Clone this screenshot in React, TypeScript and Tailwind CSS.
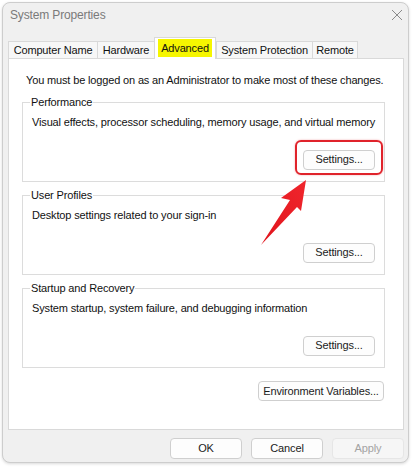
import React from 'react'

const font = "font-['Liberation_Sans','Noto_Sans',sans-serif] tracking-[-0.15px]"

function WinButton({ label, className = '', disabled = false }: { label: string; className?: string; disabled?: boolean }) {
  return (
    <button
      className={`h-[20px] whitespace-nowrap rounded-[4px] border text-[11px] leading-none ${
        disabled ? 'border-[#e6e6e6] bg-[#f6f6f6] text-[#a3a3a3]' : 'border-[#cfcfcf] bg-[#fdfdfd] text-[#1b1b1b]'
      } ${className}`}
    >
      {label}
    </button>
  )
}

function GroupBox({ title, text, highlight = false }: { title: string; text: string; highlight?: boolean }) {
  return (
    <fieldset className="w-[363px] border border-[#dcdcdc] px-[9px] pb-[11px]">
      <legend className="-ml-[2px] px-[1px] text-[11px] leading-[14px] text-[#111]">{title}</legend>
      <p className="mt-[5px] whitespace-nowrap text-[11px] leading-[16px] text-[#111]">{text}</p>
      <div className="mt-[16px] flex justify-end">
        <div className="relative">
          <WinButton label="Settings..." className="w-[72px]" />
          {highlight && (
            <div className="pointer-events-none absolute -left-[8px] -right-[8px] -top-[6px] -bottom-[5px] rounded-[6px] border-2 border-[#e0232b] shadow-[0_0_2px_rgba(224,35,43,0.4)]" />
          )}
        </div>
      </div>
    </fieldset>
  )
}

const tabs = [
  { name: 'Computer Name', w: 'w-[89px]' },
  { name: 'Hardware', w: 'w-[57px]' },
  { name: 'Advanced', w: 'w-[62px]', active: true },
  { name: 'System Protection', w: 'w-[96px]' },
  { name: 'Remote', w: 'w-[46px]' },
]

export default function App() {
  return (
    <div className={`relative h-[468px] w-[412px] overflow-hidden bg-white pl-[2px] pt-[2px] ${font}`}>
      {/* window */}
      <div className="flex h-[461px] w-[407px] flex-col rounded-[8px] border border-[#cdcdcd] bg-[#f0f0f0] shadow-[0_1px_3px_rgba(0,0,0,0.15)]">
        {/* title bar */}
        <div className="flex h-[34px] items-start justify-between pl-[7px] pr-[5px] pt-[3px]">
          <span className="text-[12px] leading-[18px] text-[#7a7a7a]">System Properties</span>
          <svg width="12" height="12" viewBox="0 0 12 12" className="mt-[3px]">
            <path d="M1 1 L11 11 M11 1 L1 11" stroke="#8a8a8a" strokeWidth="1" />
          </svg>
        </div>

        {/* tabs */}
        <div className="flex h-[21px] items-end pl-[5px]">
          {tabs.map((t) =>
            t.active ? (
              <div
                key={t.name}
                className={`${t.w} relative z-10 -mb-[1px] flex h-[22px] items-start justify-center border border-b-0 border-[#d9d9d9] bg-white pt-[1px]`}
              >
                <span className="bg-[#f6f600] px-[3px] py-[1px] text-[11px] leading-[16px] text-[#111]">{t.name}</span>
              </div>
            ) : (
              <div
                key={t.name}
                className={`${t.w} flex h-[17px] items-center justify-center whitespace-nowrap border border-b-0 border-r-0 border-[#d9d9d9] bg-[#f7f7f7] text-[11px] text-[#111] last:border-r`}
              >
                {t.name}
              </div>
            ),
          )}
        </div>

        {/* tab page */}
        <div className="ml-[5px] flex h-[372px] w-[396px] flex-col border border-[#d9d9d9] bg-white px-[13px] pt-[13px]">
          <p className="whitespace-nowrap pl-[4px] text-[11px] leading-[16px] text-[#111]">
            You must be logged on as an Administrator to make most of these changes.
          </p>
          <div className="mt-[7px] flex flex-col gap-[6px]">
            <GroupBox title="Performance" text="Visual effects, processor scheduling, memory usage, and virtual memory" highlight />
            <GroupBox title="User Profiles" text="Desktop settings related to your sign-in" />
            <GroupBox title="Startup and Recovery" text="System startup, system failure, and debugging information" />
          </div>
          <div className="mt-[13px] flex w-[362px] justify-end">
            <WinButton label="Environment Variables..." className="w-[126px]" />
          </div>
        </div>

        {/* footer */}
        <div className="flex justify-end gap-[9px] pr-[4px] pt-[8px]">
          <WinButton label="OK" className="h-[21px] w-[72px]" />
          <WinButton label="Cancel" className="h-[21px] w-[72px]" />
          <WinButton label="Apply" className="h-[21px] w-[72px]" disabled />
        </div>
      </div>

      {/* annotation arrow */}
      <svg className="pointer-events-none absolute left-0 top-0" width="412" height="468">
        <defs>
          <linearGradient id="arw" x1="0" y1="1" x2="1" y2="0">
            <stop offset="0" stopColor="#e0141c" />
            <stop offset="1" stopColor="#f0262d" />
          </linearGradient>
        </defs>
        <polygon points="306,180 281,198 290,200 261,245 297,207 301,211" fill="url(#arw)" />
      </svg>
    </div>
  )
}
